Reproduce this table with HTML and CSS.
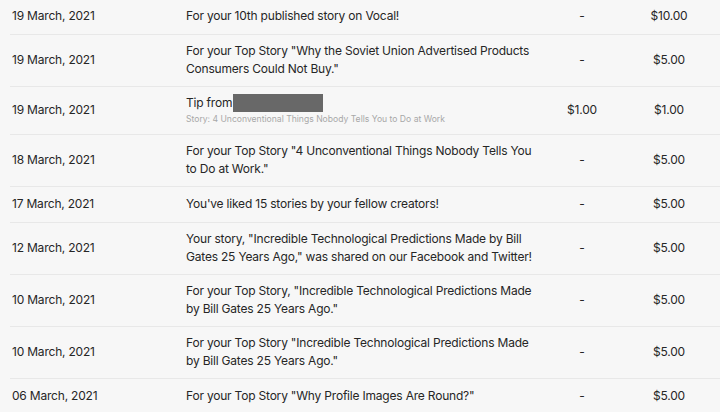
FILE: index.html
```html
<!DOCTYPE html>
<html lang="en">
<head>
    <meta charset="UTF-8">
    <meta name="viewport" content="width=device-width, initial-scale=1.0">
    <title>Earnings</title>
    <link rel="stylesheet" href="styles.css">
</head>
<body>
    <div class="earnings">
        <div class="row">
            <div class="date">19 March, 2021</div>
            <div class="desc">For your 10th published story on Vocal!</div>
            <div class="tip">-</div>
            <div class="amount">$10.00</div>
        </div>
        <div class="row">
            <div class="date">19 March, 2021</div>
            <div class="desc">For your Top Story "Why the Soviet Union Advertised Products Consumers Could Not Buy."</div>
            <div class="tip">-</div>
            <div class="amount">$5.00</div>
        </div>
        <div class="row">
            <div class="date">19 March, 2021</div>
            <div class="desc">
                <div class="tip-from">Tip from<span class="redacted"></span></div>
                <div class="story">Story: 4 Unconventional Things Nobody Tells You to Do at Work</div>
            </div>
            <div class="tip">$1.00</div>
            <div class="amount">$1.00</div>
        </div>
        <div class="row">
            <div class="date">18 March, 2021</div>
            <div class="desc">For your Top Story "4 Unconventional Things Nobody Tells You to Do at Work."</div>
            <div class="tip">-</div>
            <div class="amount">$5.00</div>
        </div>
        <div class="row">
            <div class="date">17 March, 2021</div>
            <div class="desc">You've liked 15 stories by your fellow creators!</div>
            <div class="tip">-</div>
            <div class="amount">$5.00</div>
        </div>
        <div class="row">
            <div class="date">12 March, 2021</div>
            <div class="desc">Your story, "Incredible Technological Predictions Made by Bill Gates 25 Years Ago," was shared on our Facebook and Twitter!</div>
            <div class="tip">-</div>
            <div class="amount">$5.00</div>
        </div>
        <div class="row">
            <div class="date">10 March, 2021</div>
            <div class="desc">For your Top Story, "Incredible Technological Predictions Made by Bill Gates 25 Years Ago."</div>
            <div class="tip">-</div>
            <div class="amount">$5.00</div>
        </div>
        <div class="row">
            <div class="date">10 March, 2021</div>
            <div class="desc">For your Top Story "Incredible Technological Predictions Made by Bill Gates 25 Years Ago."</div>
            <div class="tip">-</div>
            <div class="amount">$5.00</div>
        </div>
        <div class="row">
            <div class="date">06 March, 2021</div>
            <div class="desc">For your Top Story "Why Profile Images Are Round?"</div>
            <div class="tip">-</div>
            <div class="amount">$5.00</div>
        </div>
    </div>
</body>
</html>
```

FILE: styles.css
```css
body {
    margin: 0;
    background-color: #f7f7f7;
    color: #262626;
    font-family: Inter, "Noto Sans", sans-serif;
    font-size: 12px;
    letter-spacing: -0.2px;
    line-height: 18px;
}
.earnings {
    margin: -1px 0 0 10px;
}
.row {
    display: grid;
    grid-template-columns: 174px 346px 100px 74px 1fr;
    align-items: center;
    box-sizing: border-box;
    min-height: 36px;
    padding: 7px 0 8px 2px;
    border-bottom: 1px solid #e8e8e8;
}
.tip, .amount {
    text-align: center;
}
.tip-from {
    display: flex;
    align-items: center;
}
.redacted {
    display: inline-block;
    width: 90px;
    height: 18px;
    margin-left: 1px;
    background-color: #686868;
}
.story {
    font-size: 8.6px;
    letter-spacing: 0;
    line-height: 14px;
    color: #a8a8a8;
}
```
